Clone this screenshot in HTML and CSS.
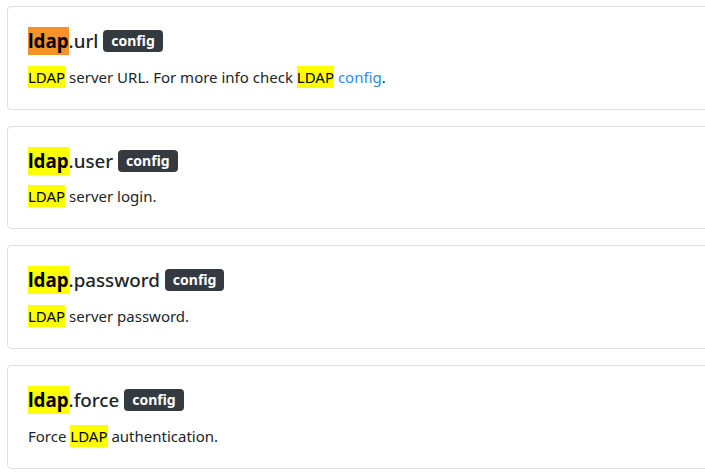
FILE: index.html
```html
<!DOCTYPE html>
<html lang="en">
<head>
<meta charset="utf-8">
<link rel="stylesheet" href="styles.css">
</head>
<body>
<div class="list">
  <div class="card">
    <h5 class="title"><mark class="hl-current">ldap</mark>.url <span class="badge">config</span></h5>
    <p class="desc"><mark>LDAP</mark> server URL. For more info check <mark>LDAP</mark> <a href="#">config</a>.</p>
  </div>
  <div class="card">
    <h5 class="title"><mark>ldap</mark>.user <span class="badge">config</span></h5>
    <p class="desc"><mark>LDAP</mark> server login.</p>
  </div>
  <div class="card">
    <h5 class="title"><mark>ldap</mark>.password <span class="badge">config</span></h5>
    <p class="desc"><mark>LDAP</mark> server password.</p>
  </div>
  <div class="card">
    <h5 class="title"><mark>ldap</mark>.force <span class="badge">config</span></h5>
    <p class="desc">Force <mark>LDAP</mark> authentication.</p>
  </div>
</div>
</body>
</html>
```
FILE: styles.css
```css
html, body {
  margin: 0;
  padding: 0;
  background: #fff;
  overflow: hidden;
}
body {
  font-family: "Noto Sans", "Open Sans", sans-serif;
  font-size: 15px;
  line-height: 24px;
  color: #212529;
}
.list {
  padding: 6px 0 0 7px;
  width: 740px;
}
.card {
  border: 1px solid #dfdfdf;
  border-radius: 4px;
  padding: 20px;
  margin-bottom: 16px;
  background: #fff;
}
.title {
  margin: 0 0 11.67px;
  font-size: 18.75px;
  font-weight: 500;
  line-height: 26px;
  padding-top: 1px;
  height: 25px;
}
mark {
  background: #ffff00;
  color: #000;
  padding: 0;
}
.desc mark {
  padding: 1px 0;
}
.title mark {
  font-weight: 700;
  padding: 1px 0 2px;
}
mark.hl-current {
  background: #f7922a;
}
.badge {
  display: inline-block;
  background: #343a40;
  color: #fff;
  font-size: 14px;
  font-weight: 700;
  line-height: 1;
  padding: 4px 8px;
  border-radius: 4px;
  vertical-align: 2px;
}
.desc {
  margin: 0;
}
a {
  color: #3389f0;
  text-decoration: none;
}
```
